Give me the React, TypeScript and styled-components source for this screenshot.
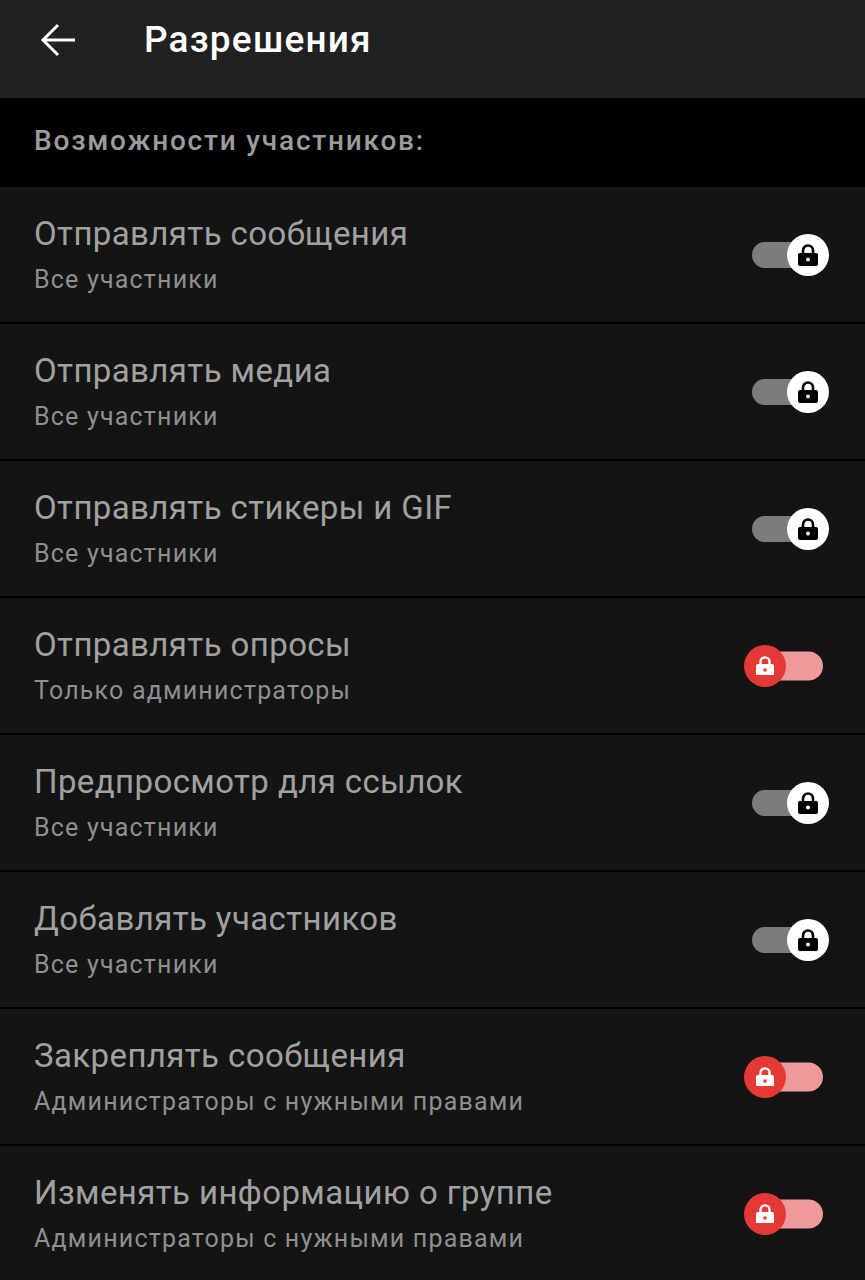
import styled, { createGlobalStyle } from "styled-components";

const GlobalStyle = createGlobalStyle`
  body {
    margin: 0;
    background: #141414;
    font-family: Roboto, "Noto Sans", "Liberation Sans", sans-serif;
  }
`;

const StPage = styled.div`
  width: 865px;
  min-height: 1280px;
  background: #141414;
`;

const StHeader = styled.header`
  height: 98px;
  box-sizing: border-box;
  padding: 18px 0 0 38px;
  background: #212121;
  display: flex;
  align-items: flex-start;
  gap: 66px;
`;

const StBackButton = styled.button`
  width: 40px;
  height: 44px;
  padding: 0;
  border: none;
  background: none;
  display: flex;
  align-items: center;
  justify-content: center;
`;

const StTitle = styled.h1`
  margin: 0;
  font-size: 37px;
  line-height: 44px;
  font-weight: 500;
  letter-spacing: 1.2px;
  color: #ffffff;
`;

const StSectionHeader = styled.div`
  height: 89px;
  box-sizing: border-box;
  padding: 26px 34px 0;
  background: #000000;
  font-size: 28px;
  line-height: 34px;
  font-weight: 500;
  letter-spacing: 1.8px;
  color: #9c9c9c;
`;

const StRow = styled.div`
  height: 137px;
  box-sizing: border-box;
  padding: 0 36px 0 34px;
  display: flex;
  align-items: center;
  justify-content: space-between;
  border-bottom: 2px solid #000000;
  background: #141414;
`;

const StTexts = styled.div`
  display: flex;
  flex-direction: column;
  gap: 11px;
`;

const StRowTitle = styled.div`
  font-size: 33px;
  line-height: 40px;
  letter-spacing: 0.4px;
  color: #a1a1a1;
`;

const StRowSub = styled.div`
  font-size: 25px;
  line-height: 30px;
  letter-spacing: 1.2px;
  color: #8f8f8f;
`;

const StSwitch = styled.div<{ $on: boolean }>`
  position: relative;
  width: ${(p) => (p.$on ? "85px" : "77px")};
  height: 42px;
  display: flex;
  align-items: center;
  justify-content: ${(p) => (p.$on ? "flex-start" : "flex-end")};
`;

const StTrack = styled.div<{ $on: boolean }>`
  position: absolute;
  top: 50%;
  transform: translateY(-50%);
  left: ${(p) => (p.$on ? "20px" : "0")};
  right: ${(p) => (p.$on ? "6px" : "14px")};
  height: ${(p) => (p.$on ? "29px" : "26px")};
  border-radius: 15px;
  background: ${(p) => (p.$on ? "#ef9a9a" : "#7c7c7c")};
`;

const StKnob = styled.div<{ $on: boolean }>`
  position: relative;
  width: 42px;
  height: 42px;
  border-radius: 50%;
  background: ${(p) => (p.$on ? "#e53935" : "#ffffff")};
  color: ${(p) => (p.$on ? "#ffffff" : "#000000")};
  display: flex;
  align-items: center;
  justify-content: center;
`;

function LockIcon({ size, hole }: { size: number; hole: string }) {
  return (
    <svg width={size} height={size * 1.1} viewBox="0 0 20 22">
      <path
        d="M5 10V6.5a5 5 0 0 1 10 0V10"
        fill="none"
        stroke="currentColor"
        strokeWidth="2.6"
      />
      <rect x="0" y="9" width="20" height="13" rx="2" fill="currentColor" />
      <circle cx="10" cy="15.5" r="2" fill={hole} />
    </svg>
  );
}

function Toggle({ on }: { on: boolean }) {
  return (
    <StSwitch $on={on}>
      <StTrack $on={on} />
      <StKnob $on={on}>
        <LockIcon size={on ? 18 : 20} hole={on ? "#e53935" : "#ffffff"} />
      </StKnob>
    </StSwitch>
  );
}

const permissions = [
  { title: "Отправлять сообщения", sub: "Все участники", locked: false },
  { title: "Отправлять медиа", sub: "Все участники", locked: false },
  { title: "Отправлять стикеры и GIF", sub: "Все участники", locked: false },
  { title: "Отправлять опросы", sub: "Только администраторы", locked: true },
  { title: "Предпросмотр для ссылок", sub: "Все участники", locked: false },
  { title: "Добавлять участников", sub: "Все участники", locked: false },
  {
    title: "Закреплять сообщения",
    sub: "Администраторы с нужными правами",
    locked: true,
  },
  {
    title: "Изменять информацию о группе",
    sub: "Администраторы с нужными правами",
    locked: true,
  },
];

export default function App() {
  return (
    <StPage>
      <GlobalStyle />
      <StHeader>
        <StBackButton>
          <svg width="36" height="34" viewBox="0 0 36 34">
            <path
              d="M35 17H4M18 2L3 17l15 15"
              fill="none"
              stroke="#ffffff"
              strokeWidth="3"
            />
          </svg>
        </StBackButton>
        <StTitle>Разрешения</StTitle>
      </StHeader>
      <StSectionHeader>Возможности участников:</StSectionHeader>
      {permissions.map((item) => (
        <StRow key={item.title}>
          <StTexts>
            <StRowTitle>{item.title}</StRowTitle>
            <StRowSub>{item.sub}</StRowSub>
          </StTexts>
          <Toggle on={item.locked} />
        </StRow>
      ))}
    </StPage>
  );
}
